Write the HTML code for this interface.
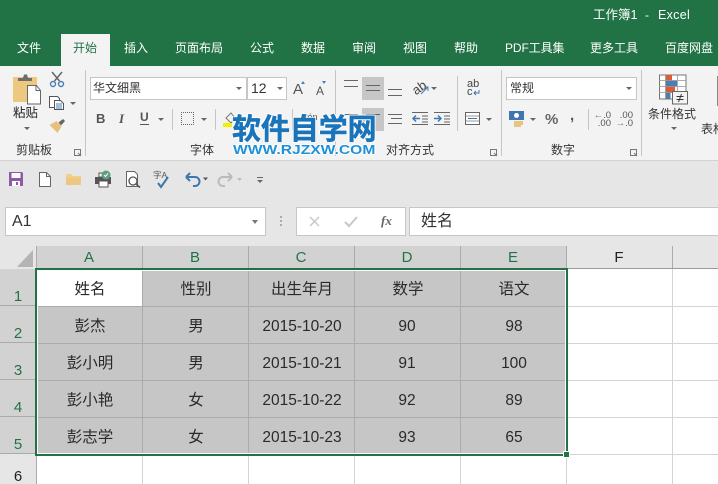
<!DOCTYPE html>
<html lang="zh"><head><meta charset="utf-8">
<style>
html,body{margin:0;padding:0}
body{width:718px;height:484px;overflow:hidden;background:#fff;position:relative;font-family:"Liberation Sans","Noto Sans CJK SC",sans-serif;color:#222}
.a{position:absolute}
.t{position:absolute;white-space:nowrap;line-height:1}
.tab{position:absolute;top:41px;font-size:12px;color:#fff;white-space:nowrap;line-height:14px}
.rl{font-size:12px;color:#333}
.sep{position:absolute;width:1px;background:#c6c6c6}
.dd{position:absolute;width:0;height:0;border-left:3px solid transparent;border-right:3px solid transparent;border-top:3px solid #666}
.ln{position:absolute;height:1px;background:#666}
.cell{position:absolute;width:106px;text-align:center;font-size:15.5px;line-height:20px;color:#2a2a2a;white-space:nowrap}
.hd{position:absolute;top:247px;height:21px;width:106px;text-align:center;font-size:15px;line-height:22px;color:#217346}
.rh{position:absolute;left:0;width:36px;height:37px;background:#d2d2d2;box-sizing:border-box;border-bottom:1px solid #ababab;color:#217346;font-size:15px;text-align:center;line-height:55px;overflow:hidden}
.box{position:absolute;background:#fff;border:1px solid #c6c6c6;box-sizing:border-box}
</style></head><body>

<!-- title + tabs -->
<div class="a" style="left:0;top:0;width:718px;height:66px;background:#217346"></div>
<div class="t" style="left:593px;top:8px;font-size:12.500px;color:#fff;line-height:14px">工作簿1</div>
<div class="t" style="left:645px;top:8px;font-size:12px;color:#fff;line-height:14px">-</div>
<div class="t" style="left:658px;top:8px;font-size:12.500px;color:#fff;line-height:14px;letter-spacing:.3px">Excel</div>
<div class="a" style="left:61px;top:34px;width:49px;height:32px;background:#f3f3f3"></div>
<div class="tab" style="left:17px">文件</div>
<div class="tab" style="left:73px;color:#217346">开始</div>
<div class="tab" style="left:124px">插入</div>
<div class="tab" style="left:175px">页面布局</div>
<div class="tab" style="left:250px">公式</div>
<div class="tab" style="left:301px">数据</div>
<div class="tab" style="left:352px">审阅</div>
<div class="tab" style="left:403px">视图</div>
<div class="tab" style="left:454px">帮助</div>
<div class="tab" style="left:505px;letter-spacing:-.1px">PDF工具集</div>
<div class="tab" style="left:590px">更多工具</div>
<div class="tab" style="left:665px">百度网盘</div>

<!-- ribbon -->
<div class="a" style="left:0;top:66px;width:718px;height:94px;background:#f3f3f3;border-bottom:1px solid #d2d2d2"></div>
<div class="sep" style="left:85px;top:70px;height:86px"></div>
<div class="sep" style="left:335px;top:70px;height:86px"></div>
<div class="sep" style="left:457px;top:76px;height:55px"></div>
<div class="sep" style="left:501px;top:70px;height:86px"></div>
<div class="sep" style="left:641px;top:70px;height:86px"></div>
<div class="sep" style="left:172px;top:109px;height:21px"></div>
<div class="sep" style="left:215px;top:109px;height:21px"></div>
<div class="sep" style="left:292px;top:109px;height:21px"></div>
<div class="sep" style="left:588px;top:109px;height:21px"></div>

<!-- clipboard -->
<svg class="a" style="left:0;top:0" width="90" height="140">
<path d="M13 77h24v25H13z" fill="#edc87e"/>
<path d="M18 81v-3h5l1-3.500h3l1 3.500h4v3z" fill="#6d6d6d"/>
<path d="M27.500 85.500h9l4 5v13.500h-13z" fill="#fff" stroke="#666"/>
<path d="M36 85.500v5h4.500" fill="none" stroke="#666"/>
<path d="M52 72l7.500 9M62 72l-7.500 9" stroke="#666" stroke-width="1.500" fill="none"/>
<circle cx="53" cy="84" r="2.500" fill="none" stroke="#4a7fb5" stroke-width="1.400"/>
<circle cx="61" cy="84" r="2.500" fill="none" stroke="#4a7fb5" stroke-width="1.400"/>
<path d="M49.500 96.500h8l2 2v9h-10z" fill="#fff" stroke="#555"/>
<path d="M54.500 100.500h6l3 3v6h-9z" fill="#fff" stroke="#555"/>
<path d="M56 104h6M56 106h6M56 108h6" stroke="#4a7fb5"/>
<path d="M49.500 125l7-4 5 5.500-4 6.500z" fill="#e9bf7b"/>
<path d="M58.500 122.500l4.500-3.500 2 2-4 4.500z" fill="#666"/>
</svg>
<div class="dd" style="left:70px;top:102px"></div>
<div class="t" style="left:13px;top:106px;font-size:12.500px;line-height:15px">粘贴</div>
<div class="dd" style="left:24px;top:127px"></div>
<div class="t rl" style="left:16px;top:143px;line-height:14px">剪贴板</div>

<!-- font group -->
<div class="box" style="left:90px;top:77px;width:157px;height:23px;color:#333;font-size:12px;line-height:21px;padding-left:2px">华文细黑</div>
<div class="dd" style="left:236px;top:87px"></div>
<div class="box" style="left:247px;top:77px;width:40px;height:23px;color:#333;font-size:14px;line-height:21px;padding-left:3px">12</div>
<div class="dd" style="left:277px;top:87px"></div>
<div class="t" style="left:293px;top:81px;font-size:15px;color:#555;line-height:17px">A</div>
<div class="a" style="left:301px;top:81px;width:0;height:0;border-left:2.500px solid transparent;border-right:2.500px solid transparent;border-bottom:3px solid #4a7fb5"></div>
<div class="t" style="left:316px;top:84px;font-size:12px;color:#555;line-height:14px">A</div>
<div class="a" style="left:322px;top:81px;width:0;height:0;border-left:2.500px solid transparent;border-right:2.500px solid transparent;border-top:3px solid #4a7fb5"></div>
<div class="t" style="left:96px;top:111px;font-size:13px;font-weight:bold;color:#555;line-height:15px">B</div>
<div class="t" style="left:119px;top:111px;font-size:13px;font-style:italic;font-family:'Liberation Serif',serif;font-weight:bold;color:#555;line-height:15px">I</div>
<div class="t" style="left:140px;top:111px;font-size:12px;font-weight:bold;color:#555;line-height:13px;border-bottom:1px solid #555">U</div>
<div class="dd" style="left:158px;top:118px"></div>
<div class="a" style="left:181px;top:112px;width:13px;height:13px;border:1px dotted #666;box-sizing:border-box"></div>
<div class="dd" style="left:201px;top:118px"></div>
<svg class="a" style="left:223px;top:110px" width="16" height="18"><path d="M3 8l5-5 4 5-4 5z" fill="none" stroke="#777"/><rect x="0" y="13" width="9" height="4" fill="#f5f000"/></svg>
<div class="t" style="left:301px;top:112px;font-size:9px;color:#555;line-height:10px">wén</div>
<div class="t rl" style="left:190px;top:143px;line-height:14px">字体</div>

<!-- alignment -->
<div class="a" style="left:362px;top:77px;width:22px;height:23px;background:#c6c6c6"></div>
<div class="a" style="left:362px;top:108px;width:22px;height:23px;background:#c6c6c6"></div>
<div class="ln" style="left:344px;top:80px;width:14px"></div><div class="ln" style="left:344px;top:86px;width:14px"></div>
<div class="ln" style="left:366px;top:85px;width:14px"></div><div class="ln" style="left:366px;top:90px;width:14px"></div>
<div class="ln" style="left:388px;top:89px;width:14px"></div><div class="ln" style="left:388px;top:95px;width:14px"></div>
<div class="t" style="left:412px;top:81px;font-size:13px;color:#444;line-height:13px;transform:rotate(-35deg)">ab</div>
<svg class="a" style="left:420px;top:84px" width="10" height="11"><path d="M1 10l7-7M4 3h4v4" stroke="#4a7fb5" fill="none"/></svg>
<div class="dd" style="left:431px;top:87px"></div>
<div class="ln" style="left:388px;top:114px;width:14px"></div><div class="ln" style="left:391px;top:118px;width:11px"></div><div class="ln" style="left:388px;top:123px;width:14px"></div>
<div class="ln" style="left:366px;top:114px;width:14px"></div><div class="ln" style="left:344px;top:114px;width:14px"></div>
<div class="ln" style="left:412px;top:112px;width:16px"></div><div class="ln" style="left:412px;top:124px;width:16px"></div>
<div class="ln" style="left:434px;top:112px;width:16px"></div><div class="ln" style="left:434px;top:124px;width:16px"></div>
<svg class="a" style="left:412px;top:112px" width="40" height="13"><path d="M8 6.500H1M4 3.500L1 6.500l3 3" stroke="#3f76b0" stroke-width="1.500" fill="none"/><path d="M22 6.500h7M26 3.500l3 3-3 3" stroke="#3f76b0" stroke-width="1.500" fill="none"/><path d="M10 4h6M10 7h6M10 10h6M32 4h6M32 7h6M32 10h6" stroke="#666"/></svg>
<div class="t rl" style="left:386px;top:143px;line-height:14px">对齐方式</div>
<div class="t" style="left:467px;top:80px;font-size:11px;color:#444;line-height:8px;width:12px">ab<br>c</div>
<svg class="a" style="left:473px;top:90px" width="8" height="6"><path d="M6 0v3H1M3 1L1 3l2 2" stroke="#3f76b0" fill="none"/></svg>
<svg class="a" style="left:465px;top:110px" width="16" height="16"><rect x="0.500" y="2.500" width="14" height="12" fill="#fff" stroke="#666"/><path d="M1 6h13M1 11h13" stroke="#999"/><path d="M3 8.500h9" stroke="#3f76b0"/></svg>
<div class="dd" style="left:486px;top:118px"></div>

<!-- watermark -->
<div class="t" style="left:232px;top:114px;font-size:29px;font-weight:bold;color:#1a74ba;-webkit-text-stroke:.5px #1a74ba;letter-spacing:-.1px;line-height:32px;text-shadow:1px 0 #fff,-1px 0 #fff,0 1px #fff,0 -1px #fff,1px 1px #fff,-1px -1px #fff,1px -1px #fff,-1px 1px #fff">软件自学网</div>
<div class="t" style="left:233px;top:144px;font-size:12.500px;font-weight:bold;color:#1e90d8;line-height:12px;transform:scaleX(1.250);transform-origin:left top;text-shadow:1px 0 #fff,-1px 0 #fff,0 1px #fff,0 -1px #fff">WWW.RJZXW.COM</div>

<!-- number -->
<div class="box" style="left:506px;top:77px;width:131px;height:23px;color:#333;font-size:12px;line-height:21px;padding-left:3px">常规</div>
<div class="dd" style="left:626px;top:87px"></div>
<svg class="a" style="left:509px;top:110px" width="20" height="18"><rect x="0" y="1" width="15" height="9" fill="#3f76b0"/><circle cx="7.500" cy="5.500" r="2.500" fill="#fff"/><path d="M5 12h9M5 14h9M5 16h7" stroke="#e5b35d" stroke-width="1.500"/></svg>
<div class="dd" style="left:530px;top:118px"></div>
<div class="t" style="left:545px;top:111px;font-size:15px;color:#666;font-weight:bold;line-height:17px">%</div>
<div class="t" style="left:570px;top:107px;font-size:15px;color:#555;font-weight:bold;line-height:17px">,</div>
<div class="t" style="left:593px;top:112px;font-size:9.500px;color:#555;line-height:8px;text-align:right;width:18px"><span style="color:#3f76b0;font-weight:bold">←</span>.0<br>.00</div>
<div class="t" style="left:615px;top:112px;font-size:9.500px;color:#555;line-height:8px;text-align:right;width:18px">.00<br><span style="color:#3f76b0;font-weight:bold">→</span>.0</div>
<div class="t rl" style="left:551px;top:143px;line-height:14px">数字</div>

<!-- dialog launchers -->
<svg class="a" style="left:0;top:148px" width="718" height="9"><g fill="none" stroke="#777"><path d="M74.500 1.500h6v6h-6zM78 5l3 3M490.500 1.500h6v6h-6zM494 5l3 3M630.500 1.500h6v6h-6zM634 5l3 3"/></g></svg>

<!-- cond format -->
<svg class="a" style="left:655px;top:70px" width="36" height="36">
<rect x="4.500" y="5" width="26.500" height="24" fill="#fff" stroke="#777"/>
<rect x="10.500" y="5" width="6.500" height="5.500" fill="#dd5b36"/><rect x="10.500" y="10.500" width="11.500" height="6" fill="#4a7fb5"/><rect x="10.500" y="16.500" width="9.500" height="6" fill="#dd5b36"/><rect x="10.500" y="22.500" width="5" height="6" fill="#4a7fb5"/>
<path d="M4 10.500h27M4 16.500h27M4 22.500h27M10.500 5v24M22.500 5v24" stroke="#999" fill="none" opacity=".8"/>
<rect x="17.500" y="21.500" width="15" height="12.500" fill="#f3f3f3" stroke="#666"/><path d="M21.500 26.500h7M21.500 29.500h7M26.500 24l-3 8" stroke="#333" fill="none"/></svg>
<div class="t" style="left:648px;top:107px;font-size:12px;color:#333;line-height:14px">条件格式</div>
<div class="dd" style="left:671px;top:127px"></div>
<div class="t" style="left:701px;top:122px;font-size:12px;color:#333;line-height:14px">表格</div>
<div class="a" style="left:717px;top:76px;width:1px;height:30px;background:#888"></div>

<!-- QAT -->
<div class="a" style="left:0;top:161px;width:718px;height:85px;background:#e6e6e6"></div>
<svg class="a" style="left:8px;top:170px" width="270" height="20">
<path d="M1 2h13l1 1v13H1z" fill="#8c5aa8"/><rect x="3.500" y="3" width="9" height="5" fill="#fff"/><rect x="4" y="11" width="8" height="5" fill="#fff"/><rect x="8" y="12" width="2" height="3" fill="#8c5aa8"/>
<path d="M31.500 2.500h7l4 4v10h-11z" fill="#fff" stroke="#666"/><path d="M38.500 2.500v4h4" fill="none" stroke="#666"/>
<path d="M58 4h5l2 2h8v9H58z" fill="#f1cf8a"/><path d="M58 8h15l-1 7H58z" fill="#edc67f"/>
<rect x="87" y="7" width="16" height="7" fill="#555"/><rect x="91" y="11" width="9" height="6" fill="#fff" stroke="#555"/><rect x="91" y="3" width="7" height="4" fill="#fff" stroke="#555"/><circle cx="98" cy="5" r="4.500" fill="#5e9e7e"/><path d="M96 5l1.500 1.500L100 3.500" stroke="#fff" fill="none"/>
<path d="M118.500 1.500h8l3 3v12h-11z" fill="#fff" stroke="#666"/><circle cx="125" cy="11" r="4" fill="#fff" stroke="#555" stroke-width="1.300"/><path d="M128 14l4 3.500" stroke="#555" stroke-width="1.500"/>
<path d="M150 13l3 4 7-10" stroke="#3f76b0" stroke-width="2" fill="none"/>
<path d="M178 7h9a4.500 4.500 0 0 1 0 9h-2M178 7l4-4M178 7l4 4" stroke="#3f76b0" stroke-width="2" fill="none"/>
<path d="M195 7.500h5l-2.500 3z" fill="#555"/>
<path d="M224 7h-9a4.500 4.500 0 0 0 0 9h2M224 7l-4-4M224 7l-4 4" stroke="#bbb" stroke-width="2" fill="none"/>
<path d="M229 8h5l-2.500 3z" fill="#bbb"/>
<path d="M249 7.500h6" stroke="#666"/><path d="M249 10h6l-3 3z" fill="#666"/>
</svg>
<div class="t" style="left:153px;top:170px;font-size:8.500px;color:#555;line-height:10px">字A</div>

<!-- formula bar -->
<div class="box" style="left:5px;top:207px;width:261px;height:29px;font-size:16px;line-height:28px;padding-left:6px;color:#333">A1</div>
<div class="a" style="left:252px;top:220px;width:0;height:0;border-left:3.500px solid transparent;border-right:3.500px solid transparent;border-top:4px solid #777"></div>
<div class="a" style="left:280px;top:216px;width:2px;height:10px;background:repeating-linear-gradient(#aaa 0 2px,transparent 2px 4px)"></div>
<div class="box" style="left:296px;top:207px;width:110px;height:29px"></div>
<svg class="a" style="left:296px;top:207px" width="110" height="29"><path d="M14 10l9 9M23 10l-9 9" stroke="#c8c8c8" stroke-width="1.500"/><path d="M49 15l4 4 8-9" stroke="#c8c8c8" stroke-width="2" fill="none"/></svg>
<div class="t" style="left:381px;top:213px;font-family:'Liberation Serif',serif;font-style:italic;font-weight:bold;font-size:13px;color:#666;line-height:15px">fx</div>
<div class="box" style="left:409px;top:207px;width:320px;height:29px;font-size:16px;line-height:27px;padding-left:11px;color:#333">姓名</div>

<!-- column headers -->
<div class="a" style="left:0;top:246px;width:718px;height:23px;background:#e6e6e6"></div>
<div class="a" style="left:36px;top:246px;width:530px;height:23px;background:#d2d2d2"></div>
<svg class="a" style="left:0;top:246px" width="36" height="23"><path d="M33 4v17H17z" fill="#b4b4b4"/></svg>
<div class="hd" style="left:36px">A</div><div class="hd" style="left:142px">B</div><div class="hd" style="left:248px">C</div><div class="hd" style="left:354px">D</div><div class="hd" style="left:460px">E</div>
<div class="hd" style="left:566px;color:#222">F</div>
<div class="a" style="left:36px;top:246px;width:1px;height:23px;background:#ababab"></div>
<div class="a" style="left:142px;top:246px;width:1px;height:22px;background:#ababab"></div>
<div class="a" style="left:248px;top:246px;width:1px;height:22px;background:#ababab"></div>
<div class="a" style="left:354px;top:246px;width:1px;height:22px;background:#ababab"></div>
<div class="a" style="left:460px;top:246px;width:1px;height:22px;background:#ababab"></div>
<div class="a" style="left:566px;top:246px;width:1px;height:22px;background:#ababab"></div>
<div class="a" style="left:672px;top:246px;width:1px;height:22px;background:#ababab"></div>
<div class="a" style="left:566px;top:268px;width:152px;height:1px;background:#9a9a9a"></div>

<!-- row headers -->
<div class="rh" style="top:269px">1</div>
<div class="rh" style="top:306px">2</div>
<div class="rh" style="top:343px">3</div>
<div class="rh" style="top:380px">4</div>
<div class="rh" style="top:417px">5</div>
<div class="rh" style="top:454px;height:30px;background:#e6e6e6;color:#222;border:0;line-height:46px">6</div>
<div class="a" style="left:36px;top:454px;width:1px;height:30px;background:#ababab"></div>

<!-- grid -->
<div class="a" style="left:37px;top:269px;width:529px;height:185px;background:#c6c6c6"></div>
<div class="a" style="left:37px;top:269px;width:105px;height:37px;background:#fff"></div>
<svg class="a" style="left:0;top:0" width="718" height="484">
<g stroke="#ababab" stroke-width="1" fill="none">
<path d="M142.500 269v185M248.500 269v185M354.500 269v185M460.500 269v185"/>
<path d="M37 306.500h529M37 343.500h529M37 380.500h529M37 417.500h529"/>
</g>
<g stroke="#d4d4d4" stroke-width="1" fill="none">
<path d="M672.500 269v215M566.500 456v28M142.500 456v28M248.500 456v28M354.500 456v28M460.500 456v28"/>
<path d="M568 306.500h150M568 343.500h150M568 380.500h150M568 417.500h150M570 454.500h148"/>
</g>
</svg>

<div class="cell" style="left:37px;top:280px">姓名</div>
<div class="cell" style="left:143px;top:280px">性别</div>
<div class="cell" style="left:249px;top:280px">出生年月</div>
<div class="cell" style="left:355px;top:280px">数学</div>
<div class="cell" style="left:461px;top:280px">语文</div>

<div class="cell" style="left:37px;top:317px">彭杰</div>
<div class="cell" style="left:143px;top:317px">男</div>
<div class="cell" style="left:249px;top:317px">2015-10-20</div>
<div class="cell" style="left:354px;top:317px">90</div>
<div class="cell" style="left:461px;top:317px">98</div>

<div class="cell" style="left:37px;top:354px">彭小明</div>
<div class="cell" style="left:143px;top:354px">男</div>
<div class="cell" style="left:249px;top:354px">2015-10-21</div>
<div class="cell" style="left:354px;top:354px">91</div>
<div class="cell" style="left:461px;top:354px">100</div>

<div class="cell" style="left:37px;top:391px">彭小艳</div>
<div class="cell" style="left:143px;top:391px">女</div>
<div class="cell" style="left:249px;top:391px">2015-10-22</div>
<div class="cell" style="left:354px;top:391px">92</div>
<div class="cell" style="left:461px;top:391px">89</div>

<div class="cell" style="left:37px;top:428px">彭志学</div>
<div class="cell" style="left:143px;top:428px">女</div>
<div class="cell" style="left:249px;top:428px">2015-10-23</div>
<div class="cell" style="left:354px;top:428px">93</div>
<div class="cell" style="left:461px;top:428px">65</div>

<!-- selection border -->
<div class="a" style="left:35px;top:268px;width:533px;height:188px;box-sizing:border-box;border:2px solid #217346"></div>
<div class="a" style="left:37px;top:270px;width:529px;height:184px;box-sizing:border-box;border:1px solid #fff"></div>
<div class="a" style="left:563px;top:451px;width:5px;height:5px;background:#217346;border:1px solid #fff"></div>
</body></html>
